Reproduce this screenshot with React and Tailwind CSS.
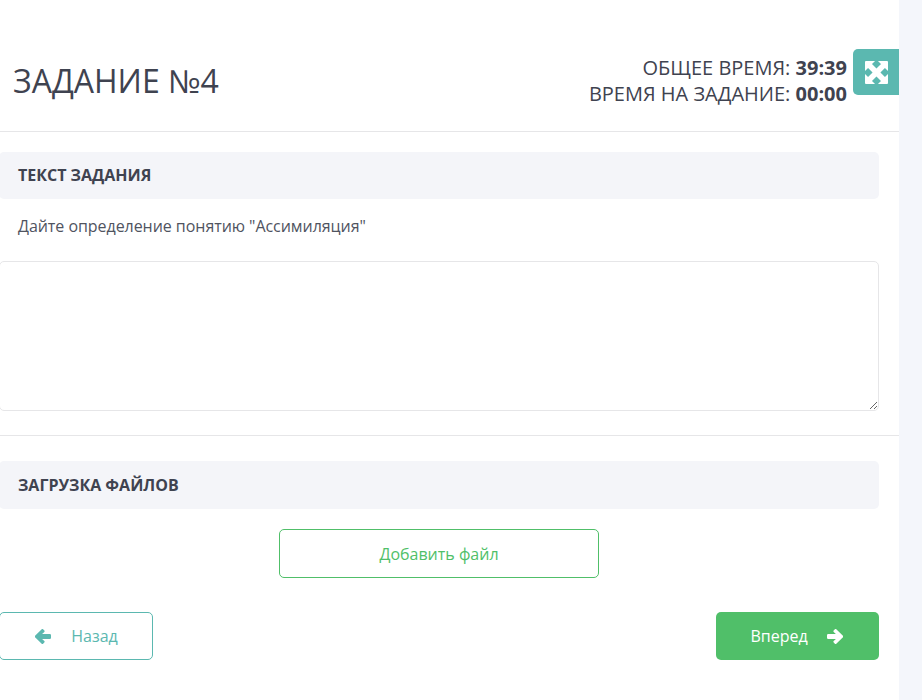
import React from "react";

function ExpandIcon() {
  return (
    <svg viewBox="0 0 24 24" className="h-[23px] w-[23px]" fill="currentColor">
      <path d="M0 1a1 1 0 0 1 1-1h9.500l-3.200 3.200 4.700 4.700 4.700-4.700L13.500 0H23a1 1 0 0 1 1 1v9.500l-3.200-3.200L16.100 12l4.700 4.700 3.200-3.200V23a1 1 0 0 1-1 1h-9.500l3.200-3.200-4.700-4.700-4.700 4.700 3.200 3.200H1a1 1 0 0 1-1-1v-9.500l3.200 3.200L7.900 12 3.200 7.300 0 10.500z" />
    </svg>
  );
}

function ArrowIcon({ flip }) {
  return (
    <svg viewBox="0 0 16 15" className={flip ? "h-[15px] w-[16px] -scale-x-100" : "h-[15px] w-[16px]"} fill="currentColor">
      <path d="M9.300 0.300 15.700 6.400a1.500 1.500 0 0 1 0 2.200L9.300 14.700a1 1 0 0 1-1.400 0L6.700 13.500a1 1 0 0 1 0-1.400L8.900 9.900H1.200A1.200 1.200 0 0 1 0 8.700V6.300A1.200 1.200 0 0 1 1.200 5.100H8.900L6.700 2.900a1 1 0 0 1 0-1.400L7.900 0.300a1 1 0 0 1 1.400 0z" />
    </svg>
  );
}

export default function App() {
  return (
    <div className="flex h-[700px] w-[922px] overflow-hidden bg-[#f4f6fb] font-['Open_Sans',sans-serif] text-[#3f4350]">
      <main className="relative flex w-[899px] shrink-0 flex-col bg-white">
        <button className="absolute right-0 top-[49px] flex h-[46px] w-[46px] items-center justify-center rounded-l-[5px] bg-[#5bb8b0] text-white">
          <ExpandIcon />
        </button>
        <header className="flex h-[132px] shrink-0 items-end justify-between border-b border-[#e6e6e8] pb-[24px] pl-[13px] pr-[52px]">
          <h1 className="pb-[4px] text-[32px] leading-[44px]">ЗАДАНИЕ №4</h1>
          <div className="text-right text-[20px] leading-[26px]">
            <div>ОБЩЕЕ ВРЕМЯ: <b>39:39</b></div>
            <div>ВРЕМЯ НА ЗАДАНИЕ: <b>00:00</b></div>
          </div>
        </header>
        <section className="-ml-px flex flex-col pr-5 pt-5">
          <h2 className="flex h-[47px] items-center rounded-[5px] bg-[#f4f5f9] pb-[2px] pl-[19px] text-[16px] font-bold">ТЕКСТ ЗАДАНИЯ</h2>
          <p className="flex h-[62px] items-center pb-[8px] pl-[19px] text-[16px] tracking-[-0.05px] text-[#50545f]">Дайте определение понятию "Ассимиляция"</p>
          <textarea className="block h-[150px] w-full resize-y rounded-[5px] border border-[#e6e6e8] outline-none" />
        </section>
        <hr className="mt-6 border-[#e6e6e8]" />
        <section className="-ml-px flex flex-col pr-5 pt-[25px]">
          <h2 className="flex h-[48px] items-center rounded-[5px] bg-[#f4f5f9] pl-[19px] text-[16px] font-bold">ЗАГРУЗКА ФАЙЛОВ</h2>
          <button className="mt-5 h-[49px] w-[320px] self-center rounded-[5px] border border-[#50bf69] text-[16px] text-[#50bf69]">Добавить файл</button>
          <div className="mt-[34px] flex items-center justify-between">
            <button className="flex h-[48px] w-[154px] items-center justify-center gap-[20px] rounded-[5px] border border-[#5bb8b0] pl-[1px] text-[16px] text-[#5bb8b0]">
              <ArrowIcon flip />
              Назад
            </button>
            <button className="flex h-[48px] w-[163px] items-center justify-center gap-[19px] rounded-[5px] bg-[#50bf69] pr-[2px] text-[16px] text-white">
              Вперед
              <ArrowIcon />
            </button>
          </div>
        </section>
      </main>
      <div className="flex-1" />
    </div>
  );
}
